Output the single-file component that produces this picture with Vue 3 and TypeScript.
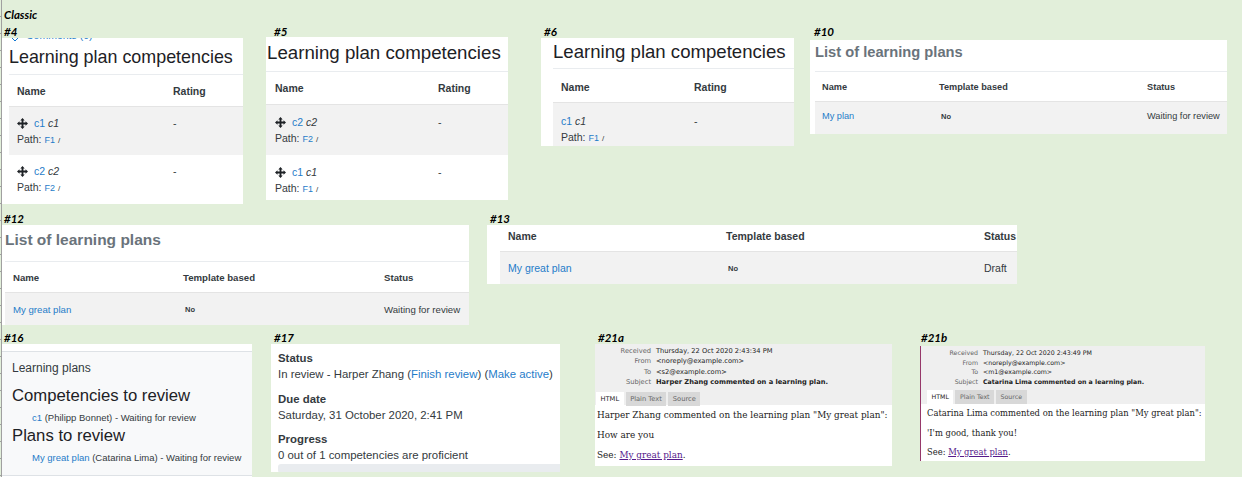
<script setup lang="ts">
interface CompRow { moved: boolean; code: string; path: string }
interface PlanPanel { tag: string; cls: string; title?: string; name: string; status: string }
interface MailPanel { tag: string; cls: string; received: string; to: string; subject: string; lines: string[] }

const labels = [
  { text: 'Classic', x: 4, y: 7 },
  { text: '#4', x: 4, y: 24 },
  { text: '#5', x: 274, y: 24 },
  { text: '#6', x: 544, y: 24 },
  { text: '#10', x: 814, y: 24 },
  { text: '#12', x: 4, y: 211 },
  { text: '#13', x: 490, y: 211 },
  { text: '#16', x: 4, y: 330 },
  { text: '#17', x: 274, y: 330 },
  { text: '#21a', x: 598, y: 330 },
  { text: '#21b', x: 921, y: 330 },
];

const compPanels: { cls: string; rows: CompRow[] }[] = [
  {
    cls: 'p4',
    rows: [
      { moved: true, code: 'c1', path: 'F1' },
      { moved: true, code: 'c2', path: 'F2' },
    ],
  },
  {
    cls: 'p5',
    rows: [
      { moved: true, code: 'c2', path: 'F2' },
      { moved: true, code: 'c1', path: 'F1' },
    ],
  },
  { cls: 'p6', rows: [{ moved: false, code: 'c1', path: 'F1' }] },
];

const planPanels: PlanPanel[] = [
  { tag: '#10', cls: 'p10', title: 'List of learning plans', name: 'My plan', status: 'Waiting for review' },
  { tag: '#12', cls: 'p12', title: 'List of learning plans', name: 'My great plan', status: 'Waiting for review' },
  { tag: '#13', cls: 'p13', name: 'My great plan', status: 'Draft' },
];

const mails: MailPanel[] = [
  {
    tag: '#21a',
    cls: 'p21a',
    received: 'Thursday, 22 Oct 2020 2:43:34 PM',
    to: '<s2@example.com>',
    subject: 'Harper Zhang commented on a learning plan.',
    lines: ['Harper Zhang commented on the learning plan "My great plan":', 'How are you'],
  },
  {
    tag: '#21b',
    cls: 'p21b',
    received: 'Thursday, 22 Oct 2020 2:43:49 PM',
    to: '<m1@example.com>',
    subject: 'Catarina Lima commented on a learning plan.',
    lines: ['Catarina Lima commented on the learning plan "My great plan":', "'I'm good, thank you!"],
  },
];
</script>

<template>
  <div class="sheet">
    <span v-for="l in labels" :key="l.text" class="tag" :style="{ left: l.x + 'px', top: l.y + 'px' }">{{ l.text }}</span>

    <!-- Competency tables -->
    <section v-for="p in compPanels" :key="p.cls" class="panel comp" :class="p.cls">
      <div v-if="p.cls === 'p4'" class="cut-link">
        <svg class="cut-chevron" width="6" height="6" viewBox="0 0 6 6"><path d="M0 1 3 4 6 1" fill="none" stroke="#1177d1" stroke-width="1" /></svg>
        Comments (0)
      </div>
      <h2 class="comp-title">Learning plan competencies</h2>
      <div class="comp-head">
        <span>Name</span>
        <span>Rating</span>
      </div>
      <div v-for="(r, i) in p.rows" :key="r.code" class="comp-row" :class="{ odd: i === 0 }">
        <div>
          <div class="comp-name">
            <svg v-if="r.moved" class="move" width="11" height="11" viewBox="0 0 12 12">
              <path d="M6 0 8.400 2.700H7V5H9.300V3.600L12 6 9.300 8.400V7H7V9.300H8.400L6 12 3.600 9.300H5V7H2.700V8.400L0 6 2.700 3.600V5H5V2.700H3.600Z" fill="#1d2125" />
            </svg>
            <a>{{ r.code }}</a> <em>{{ r.code }}</em>
          </div>
          <div class="comp-path">Path: <a>{{ r.path }}</a> <small>/</small></div>
        </div>
        <span>-</span>
      </div>
    </section>

    <!-- Plan tables -->
    <section v-for="p in planPanels" :key="p.tag" class="panel plan" :class="p.cls">
      <h2 v-if="p.title" class="plan-title">{{ p.title }}</h2>
      <div class="plan-head">
        <span>Name</span>
        <span>Template based</span>
        <span>Status</span>
      </div>
      <div class="plan-row">
        <a>{{ p.name }}</a>
        <b>No</b>
        <span>{{ p.status }}</span>
      </div>
    </section>

    <!-- Dashboard block -->
    <section class="panel p16">
      <div class="block">
        <div class="block-title">Learning plans</div>
        <h3>Competencies to review</h3>
        <div class="review"><a>c1</a> (Philipp Bonnet) - Waiting for review</div>
        <h3>Plans to review</h3>
        <div class="review"><a>My great plan</a> (Catarina Lima) - Waiting for review</div>
      </div>
    </section>

    <!-- Plan details -->
    <section class="panel p17">
      <dl>
        <dt>Status</dt>
        <dd>In review - Harper Zhang (<a>Finish review</a>) (<a>Make active</a>)</dd>
        <dt>Due date</dt>
        <dd>Saturday, 31 October 2020, 2:41 PM</dd>
        <dt>Progress</dt>
        <dd>0 out of 1 competencies are proficient</dd>
      </dl>
      <div class="progress"></div>
    </section>

    <!-- Mail previews -->
    <section v-for="m in mails" :key="m.tag" class="panel mail" :class="m.cls">
      <div class="mail-head">
        <div class="mail-grid">
          <span class="k">Received</span><span>{{ m.received }}</span>
          <span class="k">From</span><span>&lt;noreply@example.com&gt;</span>
          <span class="k">To</span><span>{{ m.to }}</span>
          <span class="k">Subject</span><b>{{ m.subject }}</b>
        </div>
        <div class="tabs">
          <span class="tab on">HTML</span>
          <span class="tab">Plain Text</span>
          <span class="tab">Source</span>
        </div>
      </div>
      <div class="mail-body">
        <p v-for="t in m.lines" :key="t">{{ t }}</p>
        <p>See: <a>My great plan</a>.</p>
      </div>
    </section>
  </div>
</template>

<style>
html, body { margin: 0; padding: 0; }
</style>

<style scoped>
.sheet {
  position: relative;
  width: 1242px;
  height: 477px;
  overflow: hidden;
  background: #e2efda;
  font-family: "Liberation Sans", Arial, sans-serif;
  color: #343a40;
}
/* spreadsheet row edge on the far left */
.sheet::before {
  content: "";
  position: absolute;
  left: 0;
  top: 0;
  bottom: 0;
  width: 1px;
  border-right: 1px solid #a0a0a0;
  background: repeating-linear-gradient(#e2efda 0, #e2efda 16px, #a0a0a0 16px, #a0a0a0 17px);
}
.tag {
  position: absolute;
  font-family: Lato, sans-serif;
  font-size: 11.5px;
  line-height: 15px;
  font-style: italic;
  font-weight: 700;
  color: #000;
}
.panel {
  position: absolute;
  background: #fff;
  overflow: hidden;
  box-sizing: border-box;
}
a { color: #1f7cc9; }

/* competencies */
.comp { font-size: 10.5px; }
.p4 { left: 2px; top: 38px; width: 241px; height: 166px; padding-left: 7px; }
.p5 { left: 266px; top: 37px; width: 242px; height: 163px; }
.p6 { left: 541px; top: 38px; width: 253px; height: 108px; padding-left: 12px; }
.cut-link {
  position: absolute;
  left: 24px;
  top: -9px;
  font-size: 10.5px;
  line-height: 13px;
  color: #1f7cc9;
}
.cut-chevron { position: absolute; left: -14px; top: 8px; }
.comp-title {
  margin: 0;
  box-sizing: content-box;
  line-height: 24px;
  font-weight: 400;
  color: #1d2125;
  white-space: nowrap;
  border-bottom: 1px solid #e9ecef;
}
.p4 .comp-title { padding-top: 7px; height: 29px; font-size: 17.900px; }
.p5 .comp-title { padding: 4px 0 0 1px; height: 30px; font-size: 18.700px; }
.p6 .comp-title { padding-top: 2px; height: 28px; font-size: 18.600px; }
.comp-head {
  display: grid;
  box-sizing: border-box;
  align-items: center;
  font-weight: 700;
  border-bottom: 1px solid #e4e4e4;
}
.comp-row {
  display: grid;
  box-sizing: border-box;
  line-height: 15px;
}
.comp-row.odd { background: #f2f2f2; }
.p4 .comp-head, .p4 .comp-row { grid-template-columns: 156px 1fr; padding-left: 8px; }
.p5 .comp-head, .p5 .comp-row { grid-template-columns: 163px 1fr; padding-left: 9px; }
.p6 .comp-head, .p6 .comp-row { grid-template-columns: 133px 1fr; padding-left: 8px; }
.p4 .comp-head { height: 32px; }
.p5 .comp-head { height: 33px; }
.p6 .comp-head { height: 34px; padding-top: 3px; }
.p4 .comp-row { height: 48px; padding-top: 9px; }
.p5 .comp-row { height: 50px; padding-top: 10px; }
.p6 .comp-row { height: 44px; padding-top: 10px; line-height: 16px; }
.comp-name { display: flex; align-items: center; gap: 3px; white-space: pre; }
.comp-path { line-height: 16px; }
.comp-path a { font-size: 9px; }
.comp-path small { font-size: 8px; }
.move { margin-right: 3px; }

/* plans */
.plan-title {
  margin: 0;
  font-weight: 700;
  color: #6a737b;
  border-bottom: 1px solid #e9ecef;
  box-sizing: content-box;
}
.plan-head, .plan-row {
  display: grid;
  align-items: center;
  white-space: nowrap;
  box-sizing: border-box;
}
.plan-head { font-weight: 700; border-bottom: 1px solid #e4e4e4; }
.plan-row { background: #f2f2f2; }
.plan-row b { font-size: 7.500px; padding-left: 2px; }

.p10 { left: 810px; top: 40px; width: 417px; height: 94px; padding-left: 5px; font-size: 9.200px; }
.p10 .plan-title { height: 31px; font-size: 14.700px; line-height: 24px; }
.p10 .plan-head, .p10 .plan-row { grid-template-columns: 117px 208px 1fr; padding-left: 7px; }
.p10 .plan-head { height: 30px; }
.p10 .plan-row { height: 32px; padding-bottom: 4px; }

.p12 { left: 2px; top: 225px; width: 467px; height: 100px; padding-left: 3px; font-size: 9.650px; }
.p12 .plan-title { height: 36px; font-size: 15.500px; line-height: 30px; }
.p12 .plan-head, .p12 .plan-row { grid-template-columns: 170px 201px 1fr; padding-left: 8px; }
.p12 .plan-head { height: 31px; }
.p12 .plan-row { height: 33px; }

.p13 { left: 487px; top: 225px; width: 530px; height: 59px; padding-left: 13px; font-size: 10.500px; }
.p13 .plan-head, .p13 .plan-row { grid-template-columns: 218px 258px 1fr; padding-left: 8px; }
.p13 .plan-head { height: 27px; padding-bottom: 5px; }
.p13 .plan-row { height: 32px; }

/* block */
.p16 { left: 2px; top: 344px; width: 250px; height: 133px; padding-top: 7px; }
.block {
  height: 125px;
  background: #f8f9fa;
  border-top: 1px solid #dee2e6;
  border-bottom: 1px solid #dee2e6;
  padding: 8px 0 0 10px;
  box-sizing: border-box;
  font-size: 9.500px;
}
.block-title { font-size: 12px; line-height: 16px; margin-bottom: 9px; }
.block h3 {
  margin: 0;
  font-size: 16.700px;
  line-height: 22px;
  font-weight: 400;
  color: #1d2125;
}
.review { padding: 5px 0 0 20px; margin-bottom: 1px; line-height: 12px; white-space: nowrap; }

/* details */
.p17 { left: 271px; top: 344px; width: 289px; height: 128px; padding: 7px 0 0 7px; font-size: 11.400px; }
dl { margin: 0; }
dt { font-weight: 700; line-height: 14px; }
dd { margin: 2px 0 9.500px; line-height: 15px; white-space: nowrap; }
dd:last-of-type { margin-bottom: 0; }
.progress { height: 9px; margin-top: 1px; background: #e9ecef; border-radius: 3px 0 0 3px; }

/* mails */
.mail { font-family: "DejaVu Serif", serif; color: #222; }
.p21a { left: 595px; top: 344px; width: 297px; height: 122px; font-size: 8.900px; }
.p21b { left: 920px; top: 346px; width: 285px; height: 115px; border-left: 1px solid #96386a; font-size: 8.400px; }
.mail-head { background: #efefef; box-sizing: border-box; padding-top: 2px; }
.p21a .mail-head { height: 61px; }
.p21b .mail-head { height: 58px; }
.mail-grid {
  display: grid;
  column-gap: 5px;
  font-family: "DejaVu Sans", sans-serif;
  white-space: nowrap;
}
.p21a .mail-grid { grid-template-columns: 56px 1fr; font-size: 6.700px; line-height: 10.300px; }
.p21b .mail-grid { grid-template-columns: 57px 1fr; font-size: 6.250px; line-height: 9.600px; }
.k { text-align: right; color: #666; }
.tabs { display: flex; gap: 2px; font-family: "DejaVu Sans", sans-serif; }
.p21a .tabs { margin: 5px 0 0 1px; font-size: 6.700px; }
.p21b .tabs { margin: 4px 0 0 6px; font-size: 6.250px; }
.tab { padding: 0 4.500px; height: 14px; line-height: 14px; background: #d8d8d8; color: #666; }
.tab.on { background: #fff; color: #222; }
.mail-body { white-space: nowrap; }
.p21a .mail-body { padding: 4px 0 0 2px; }
.p21b .mail-body { padding: 3px 0 0 6px; }
.mail-body p { margin: 0 0 8px; line-height: 12px; }
.p21b .mail-body p { margin-bottom: 7.500px; }
.mail-body a { color: #551a8b; text-decoration: underline; }
</style>
